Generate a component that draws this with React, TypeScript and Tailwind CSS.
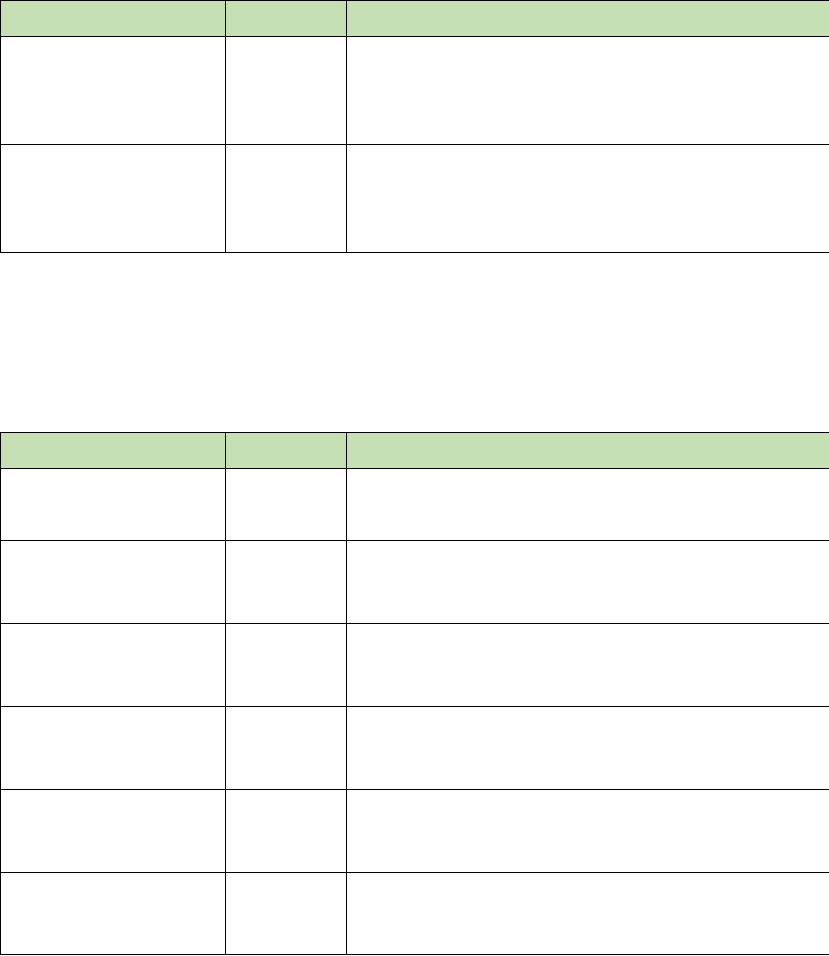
const firstRows = [108, 108];
const secondRows = [72, 83, 83, 83, 83, 82];

function Sheet({ rows }: { rows: number[] }) {
  return (
    <table className="w-[829px] table-fixed border-collapse font-['Liberation_Sans',sans-serif] text-sm">
      <colgroup>
        <col className="w-[225px]" />
        <col className="w-[121px]" />
        <col className="w-[483px]" />
      </colgroup>
      <thead>
        <tr className="h-[36px] bg-[#c6e0b4]">
          <th className="border border-black p-0" />
          <th className="border border-black p-0" />
          <th className="border border-black p-0" />
        </tr>
      </thead>
      <tbody>
        {rows.map((h, i) => (
          <tr key={i} style={{ height: h }}>
            <td className="border border-black p-0" />
            <td className="border border-black p-0" />
            <td className="border border-black p-0" />
          </tr>
        ))}
      </tbody>
    </table>
  );
}

export default function App() {
  return (
    <div className="min-h-screen bg-white">
      <Sheet rows={firstRows} />
      <div className="h-[179px]" />
      <Sheet rows={secondRows} />
    </div>
  );
}
